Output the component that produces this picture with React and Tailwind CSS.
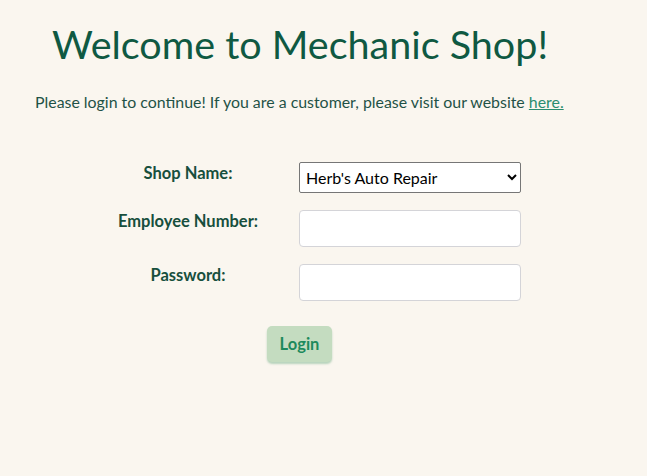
export default function App() {
  return (
    <div className="bg-[#faf6ef] min-h-screen w-full text-[#1b5a48]" style={{ fontFamily: '"Lato", sans-serif' }}>
      <div className="pt-[19px]">
        <h1 className="ml-[52px] text-[39.5px] leading-[50px] text-[#0f5942] font-normal">Welcome to Mechanic Shop!</h1>
        <p className="ml-[35px] mt-[22px] text-[15.9px] leading-[22px] text-[#1f5246]">
          Please login to continue! If you are a customer, please visit our website{" "}
          <a href="#" className="underline text-[#2a8d6f]">here.</a>
        </p>
      </div>
      <form className="mt-[49px] flex flex-col" onSubmit={(e) => e.preventDefault()}>
        <div className="flex items-start">
          <label className="w-[176px] ml-[100px] text-center font-bold text-[16.5px] leading-[20px] pt-[1px] text-[#174f3d]">Shop Name:</label>
          <select className="ml-[23px] w-[222px] h-[31px] border border-[#767676] rounded-[2px] bg-white text-[16px] text-black px-[2px]" style={{ fontFamily: '"Lato", sans-serif' }} defaultValue="herb">
            <option value="herb">Herb's Auto Repair</option>
          </select>
        </div>
        <div className="flex items-start mt-[17px]">
          <label className="w-[176px] ml-[100px] text-center font-bold text-[16.5px] leading-[20px] pt-[1px] text-[#174f3d]">Employee Number:</label>
          <input type="text" className="ml-[23px] w-[222px] h-[37px] border border-[#d4d4d8] rounded-[4px] bg-white" />
        </div>
        <div className="flex items-start mt-[17px]">
          <label className="w-[176px] ml-[100px] text-center font-bold text-[16.5px] leading-[20px] pt-[1px] text-[#174f3d]">Password:</label>
          <input type="password" className="ml-[23px] w-[222px] h-[37px] border border-[#d4d4d8] rounded-[4px] bg-white" />
        </div>
        <div className="mt-[25px] ml-[267px]">
          <button type="submit" className="w-[65px] h-[36px] rounded-[5px] bg-[#c4dcc0] text-[#1d8a5c] font-bold text-[16.5px] shadow-[0_2px_2px_rgba(120,180,140,0.5)]">Login</button>
        </div>
      </form>
    </div>
  );
}
